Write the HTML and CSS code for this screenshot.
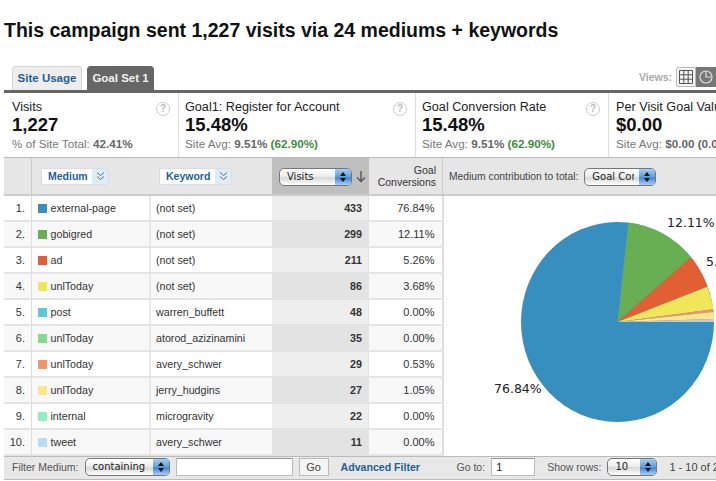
FILE: index.html
```html
<!DOCTYPE html>
<html lang="en">
<head>
<meta charset="utf-8">
<title>Campaign report</title>
<link rel="stylesheet" href="styles.css">
</head>
<body>
<h1>This campaign sent 1,227 visits via 24 mediums + keywords</h1>
<div class="tabbar">
  <a class="tab">Site Usage</a>
  <a class="tab active">Goal Set 1</a>
  <div class="views">
    <span>Views:</span>
    <button class="view">
      <svg width="14" height="14" viewBox="0 0 14 14"><path d="M.5.5h13v13H.5zM.5 4.8h13M.5 9.2h13M4.8.5v13M9.2.5v13" fill="none" stroke="#555"/></svg>
    </button>
    <button class="view on">
      <svg width="14" height="14" viewBox="0 0 14 14"><circle cx="7" cy="7" r="6" fill="none" stroke="#ddd" stroke-width="1.2"/><path d="M7 1v6h6" fill="none" stroke="#ddd" stroke-width="1.2"/></svg>
    </button>
  </div>
</div>
<div class="metrics">
  <div class="metric m1"><div class="name">Visits</div><div class="val">1,227</div><div class="sub">% of Site Total: <b>42.41%</b></div><i class="help">?</i></div>
  <div class="metric m2"><div class="name">Goal1: Register for Account</div><div class="val">15.48%</div><div class="sub">Site Avg: <b>9.51%</b> <b class="good">(62.90%)</b></div><i class="help">?</i></div>
  <div class="metric m3"><div class="name">Goal Conversion Rate</div><div class="val">15.48%</div><div class="sub">Site Avg: <b>9.51%</b> <b class="good">(62.90%)</b></div><i class="help">?</i></div>
  <div class="metric m4"><div class="name">Per Visit Goal Value</div><div class="val">$0.00</div><div class="sub">Site Avg: <b>$0.00</b> <b>(0.00%)</b></div></div>
</div>
<table class="report">
  <colgroup><col class="c1"><col class="c2"><col class="c3"><col class="c4"><col class="c5"><col class="c6"></colgroup>
  <thead>
    <tr>
      <th></th>
      <th class="dim-cell"><span class="dim d-medium"><b>Medium</b><i><svg width="9" height="10" viewBox="0 0 9 10"><path d="M1 1.5l3.5 3 3.500-3M1 5.500l3.500 3 3.500-3" fill="none" stroke="#667"/></svg></i></span></th>
      <th class="dim-cell"><span class="dim d-keyword"><b>Keyword</b><i><svg width="9" height="10" viewBox="0 0 9 10"><path d="M1 1.500l3.500 3 3.500-3M1 5.500l3.500 3 3.500-3" fill="none" stroke="#667"/></svg></i></span></th>
      <th class="sorted"><div class="sort-wrap"><span class="select s-visits"><span class="lbl">Visits</span><i></i></span><svg class="arrow" width="10" height="12" viewBox="0 0 10 12"><path d="M5 0v10M1 6.500l4 4 4-4" fill="none" stroke="#555" stroke-width="1.400"/></svg></div></th>
      <th class="goal-h">Goal<br>Conversions</th>
      <th class="chart-h"><div class="chart-ctl"><span>Medium contribution to total:</span><span class="select s-goal"><span class="lbl">Goal Cor</span><i></i></span></div></th>
    </tr>
  </thead>
  <tbody>
    <tr><td class="n">1.</td><td><i class="sw" style="background:#378fc0"></i>external-page</td><td>(not set)</td><td class="v">433</td><td class="g">76.84%</td>
      <td class="chart" rowspan="10">
        <svg class="pie" width="273" height="259" viewBox="443 196 273 259">
          <ellipse cx="617.500" cy="322" rx="96.500" ry="100" fill="#378fc0"/>
          <path d="M617.500 322L628.300 222.600A96.500 100 0 0 1 691 257.300Z" fill="#68ae53"/>
          <path d="M617.500 322L691 257.300A96.500 100 0 0 1 707.300 286.700Z" fill="#e25f33"/>
          <path d="M617.500 322L707.300 286.700A96.500 100 0 0 1 713.300 309.300Z" fill="#f0e65a"/>
          <path d="M617.500 322L713.300 309.300A96.500 100 0 0 1 713.800 312Z" fill="#f5946a"/>
          <path d="M617.500 322L713.800 312A96.500 100 0 0 1 714 319Z" fill="#fde68a"/>
          <path d="M617.500 322L714 319V322Z" fill="#c9c9c9"/>
          <text x="667" y="227">12.11%</text>
          <text x="706" y="266">5.26%</text>
          <text x="494" y="393">76.84%</text>
        </svg>
      </td></tr>
    <tr><td class="n">2.</td><td><i class="sw" style="background:#68ae53"></i>gobigred</td><td>(not set)</td><td class="v">299</td><td class="g">12.11%</td></tr>
    <tr><td class="n">3.</td><td><i class="sw" style="background:#e25f33"></i>ad</td><td>(not set)</td><td class="v">211</td><td class="g">5.26%</td></tr>
    <tr><td class="n">4.</td><td><i class="sw" style="background:#f0e65a"></i>unlToday</td><td>(not set)</td><td class="v">86</td><td class="g">3.68%</td></tr>
    <tr><td class="n">5.</td><td><i class="sw" style="background:#5bc8e0"></i>post</td><td>warren_buffett</td><td class="v">48</td><td class="g">0.00%</td></tr>
    <tr><td class="n">6.</td><td><i class="sw" style="background:#84dc8a"></i>unlToday</td><td>atorod_azizinamini</td><td class="v">35</td><td class="g">0.00%</td></tr>
    <tr><td class="n">7.</td><td><i class="sw" style="background:#f5946a"></i>unlToday</td><td>avery_schwer</td><td class="v">29</td><td class="g">0.53%</td></tr>
    <tr><td class="n">8.</td><td><i class="sw" style="background:#fde68a"></i>unlToday</td><td>jerry_hudgins</td><td class="v">27</td><td class="g">1.05%</td></tr>
    <tr><td class="n">9.</td><td><i class="sw" style="background:#8eeec4"></i>internal</td><td>microgravity</td><td class="v">22</td><td class="g">0.00%</td></tr>
    <tr><td class="n">10.</td><td><i class="sw" style="background:#b9dcf8"></i>tweet</td><td>avery_schwer</td><td class="v">11</td><td class="g">0.00%</td></tr>
  </tbody>
</table>
<div class="filter">
  <span class="f-label">Filter Medium:</span>
  <span class="select s-contain"><span class="lbl">containing</span><i></i></span>
  <span class="input i-filter"></span>
  <span class="go">Go</span>
  <a class="adv">Advanced Filter</a>
  <span class="f-label goto">Go to:</span>
  <span class="input i-goto">1</span>
  <span class="f-label rows">Show rows:</span>
  <span class="select s-rows"><span class="lbl">10</span><i></i></span>
  <span class="range">1 - 10 of 24</span>
</div>
</body>
</html>
```
FILE: styles.css
```css
* { box-sizing: border-box; }
html, body { margin: 0; width: 716px; height: 481px; overflow: hidden; background: #fff; }
body { font-family: "Liberation Sans", Arial, sans-serif; font-size: 11px; color: #333; }
i { font-style: normal; }

h1 { margin: 0; padding: 19px 0 0 4px; height: 66px; font-size: 19.500px; line-height: 22px; font-weight: bold; color: #111; white-space: nowrap; }

.tabbar { display: flex; align-items: flex-end; height: 24px; margin-left: 4px; padding-left: 8px; gap: 5px; }
.tab { width: 70px; height: 24px; line-height: 23px; text-align: center; font-size: 11.500px; font-weight: bold; color: #1f5f96; background: #eee; border: 1px solid #d5d5d5; border-bottom: 0; border-radius: 4px 4px 0 0; }
.tab.active { width: 67px; color: #f2f2f2; background: #666; border-color: #666; }
.views { margin-left: auto; display: flex; align-items: center; height: 24px; padding-bottom: 2px; font-size: 10.500px; font-weight: bold; color: #aaa; }
.views span { margin-right: 4px; }
.view { width: 20px; height: 20px; padding: 0; display: flex; align-items: center; justify-content: center; border: 1px solid #bbb; background: #f4f4f4; border-radius: 2px 0 0 2px; }
.view.on { background: #777; border-color: #777; border-radius: 0; }

.metrics { display: flex; height: 68px; margin-left: 4px; border-top: 3px solid #666; border-bottom: 1px solid #bbb; overflow: hidden; }
.metric { position: relative; flex: none; padding: 7px 0 0 8px; border-right: 1px solid #ddd; white-space: nowrap; }
.m1 { width: 175px; }
.m2 { width: 237px; padding-left: 6px; }
.m3 { width: 193px; padding-left: 6px; }
.m4 { width: 120px; padding-left: 7px; border-right: 0; }
.name { font-size: 12.650px; line-height: 15px; color: #222; }
.val { font-size: 18.500px; line-height: 20px; font-weight: bold; color: #111; }
.sub { font-size: 11.700px; line-height: 15px; color: #777; margin-top: 1px; }
.sub b { color: #666; }
.sub b.good { color: #3d8b3d; }
.help { position: absolute; top: 9px; right: 8px; width: 14px; height: 14px; border: 1px solid #ccc; border-radius: 50%; text-align: center; font-size: 10px; line-height: 12px; font-weight: bold; color: #bbb; }

.report { border-collapse: collapse; table-layout: fixed; width: 712px; margin-left: 4px; }
.c1 { width: 27.500px; } .c2 { width: 118.500px; } .c3 { width: 122px; } .c4 { width: 96.500px; } .c5 { width: 74px; } .c6 { width: 273.500px; }
.report th { height: 37px; padding: 0; background: #e6e6e6; border-bottom: 2px solid #ccc; border-right: 1px solid #ccc; font-weight: normal; text-align: left; }
.report th.dim-cell { border-right: 0; padding-left: 9px; }
.report th.sorted { background: #bfbfbf; border-right: 0; padding: 2px 0 0 7px; }
.sort-wrap { display: flex; align-items: center; gap: 4px; }
.report th.goal-h { text-align: right; padding-right: 6px; line-height: 12px; font-size: 10.500px; color: #333; }
.report th.chart-h { border-right: 0; padding-left: 6px; }
.chart-ctl { display: flex; align-items: center; gap: 6px; font-size: 10.300px; color: #444; white-space: nowrap; }
.s-goal { position: relative; top: 1px; }

.report td { height: 26px; padding: 0 0 0 5px; font-size: 10.700px; color: #333; background: #fff; border-bottom: 2px solid #e4e4e4; white-space: nowrap; overflow: hidden; }
.report tbody tr:nth-child(even) td { background: #f8f8f8; }
.report td.n { text-align: right; padding: 0 6px 0 0; border-right: 1px solid #ddd; background: #fff; font-size: 11px; }
.report td:nth-child(2) { padding-left: 5.500px; border-right: 2px solid #e8e8e8; }
.report td.v { text-align: right; padding: 0 6px 0 0; font-weight: bold; background: #eee; }
.report tbody tr:nth-child(even) td.v { background: #e3e3e3; }
.report td.g { text-align: right; padding: 0 7px 0 0; border-left: 1px solid #e4e4e4; border-right: 2px solid #ddd; font-size: 11px; }
.report tbody tr td.chart { padding: 0; background: #fff; border: 0; vertical-align: top; overflow: hidden; }
.sw { display: inline-block; width: 9px; height: 9px; margin-right: 4px; vertical-align: -1px; }
.pie { display: block; margin-left: -1px; }
.pie text { font-family: "DejaVu Sans", sans-serif; font-size: 12.500px; fill: #222; }

.dim { display: inline-flex; height: 17px; align-items: stretch; background: #fff; border: 1px solid #ddd; border-radius: 2px; font-size: 10.500px; color: #1f5f96; }
.dim b { display: block; line-height: 14px; padding-left: 6px; }
.dim i { width: 16px; display: flex; align-items: center; justify-content: center; background: #dcecf8; margin-left: auto; }
.d-medium { width: 68px; }
.d-keyword { width: 73px; }

.select { display: inline-flex; flex: none; height: 18px; border: 1px solid #777; border-radius: 5px; background: linear-gradient(#fff, #eee 45%, #d8d8d8 55%, #fff); font-family: "DejaVu Sans", sans-serif; font-size: 10px; line-height: 16px; color: #222; overflow: hidden; }
.select .lbl { flex: 1; padding-left: 7px; overflow: hidden; white-space: nowrap; }
.select i { position: relative; width: 16px; flex: none; background: linear-gradient(#a8cdf0, #5a9fe0 50%, #3f86d6 55%, #a8d0f5); }
.select i::before, .select i::after { content: ""; position: absolute; left: 5px; border-left: 3px solid transparent; border-right: 3px solid transparent; }
.select i::before { top: 3px; border-bottom: 4px solid #111; }
.select i::after { bottom: 3px; border-top: 4px solid #111; }
.s-visits { width: 73px; }
.s-goal { width: 72px; }
.s-goal .lbl { margin-right: 5px; }
.s-contain { width: 85px; }
.s-rows { width: 50px; }
.arrow { flex: none; }

.filter { display: flex; align-items: center; height: 24px; margin-left: 4px; padding: 0 0 2px 8px; background: #e8e8e8; border-top: 1px solid #bbb; border-bottom: 1px solid #bbb; font-size: 10.500px; color: #555; white-space: nowrap; overflow: hidden; }
.f-label { flex: none; }
.s-contain { margin-left: 6px; }
.input { flex: none; height: 18px; margin-left: 6px; background: #fff; border: 1px solid #bbb; border-top-color: #999; padding-left: 4px; font-size: 11px; line-height: 16px; color: #222; }
.i-filter { width: 117px; }
.go { flex: none; width: 30px; height: 18px; margin-left: 6px; text-align: center; line-height: 16px; font-size: 11px; background: #f4f4f4; border: 1px solid #bbb; color: #444; }
.adv { flex: none; margin-left: 12px; width: 116px; font-weight: bold; color: #1f5f96; font-size: 10.600px; }
.i-goto { width: 44px; }
.rows { margin-left: 12px; }
.s-rows { margin-left: 6px; }
.range { flex: none; margin-left: 12px; font-size: 11px; color: #444; }
```
